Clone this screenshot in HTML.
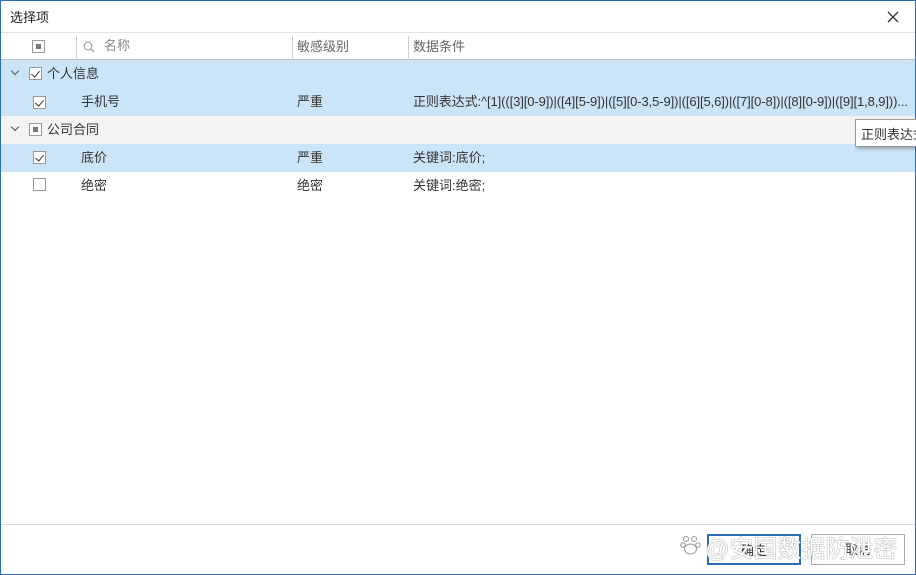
<!DOCTYPE html>
<html><head><meta charset="utf-8"><style>
*{margin:0;padding:0;box-sizing:border-box}
body{width:916px;height:575px;overflow:hidden;background:#fff;font-family:"Liberation Sans","Noto Sans CJK SC",sans-serif;font-size:12px;color:#333}
.win{position:absolute;left:0;top:0;width:916px;height:575px;border:1px solid #2b6cb5;background:#fff}
.title{position:absolute;left:9px;top:6px;font-size:13px;color:#222}
.hdr{position:absolute;left:0;top:31px;width:914px;height:28px;border-top:1px solid #e2e2e2;border-bottom:1px solid #b9c3cc}
.sep{position:absolute;top:3px;width:1px;height:22px;background:#ccc}
.cb{position:absolute;width:13px;height:13px;border:1px solid #999;background:#fff}
.cb.ind::after{content:"";position:absolute;left:3px;top:3px;width:5px;height:5px;background:#777}
.cb.chk::after{content:"";position:absolute;left:3px;top:1px;width:4px;height:7px;border-right:1.4px solid #333;border-bottom:1.4px solid #333;transform:rotate(40deg)}
.row{position:absolute;left:0;width:914px;height:28px}
.t{position:absolute;top:3px;white-space:nowrap}
.chev{position:absolute;left:11px;top:8px;width:6px;height:6px;border-right:1.3px solid #555;border-bottom:1.3px solid #555;transform:rotate(45deg)}
.foot{position:absolute;left:0;top:523px;width:914px;border-top:1px solid #ddd}
.btn{position:absolute;top:533px;width:94px;height:31px;border:1px solid #aaa;background:#fff;text-align:center;line-height:29px;font-size:13px}
.tip{position:absolute;left:854px;top:118px;width:70px;height:28px;border:1px solid #999;background:#fff;box-shadow:2px 2px 3px rgba(0,0,0,.25);padding:4px 5px;font-size:13px;white-space:nowrap;overflow:hidden}
.wm{position:absolute;left:704px;top:528px;font-size:24px;color:#fff;text-shadow:0 0 1px #888,0 0 1px #888;white-space:nowrap}
</style></head><body><div class="win">
<div class="title">选择项</div>
<svg style="position:absolute;left:886px;top:10px" width="12" height="12" viewBox="0 0 12 12"><path d="M1 1 11 11M11 1 1 11" stroke="#333" stroke-width="1.3"/></svg>
<div class="hdr">
 <div class="cb ind" style="left:31px;top:7px"></div>
 <div class="sep" style="left:75px"></div>
 <svg style="position:absolute;left:82px;top:8px" width="12" height="12" viewBox="0 0 12 12"><circle cx="5" cy="5" r="3.8" fill="none" stroke="#aaa" stroke-width="1.3"/><path d="M8 8 11 11" stroke="#aaa" stroke-width="1.5"/></svg>
 <div class="t" style="left:103px;top:2px;color:#888;font-size:13px">名称</div>
 <div class="sep" style="left:291px"></div>
 <div class="t" style="left:296px;color:#666;font-size:13px">敏感级别</div>
 <div class="sep" style="left:407px"></div>
 <div class="t" style="left:412px;color:#666;font-size:13px">数据条件</div>
</div>
<div class="row" style="top:59px;background:#cce4f7"><div class="chev"></div><div class="cb chk" style="left:28px;top:7px"></div><div class="t" style="left:46px;font-size:13px;top:3px">个人信息</div></div>
<div class="row" style="top:87px;background:#cce4f7"><div class="cb chk" style="left:32px;top:8px"></div><div class="t" style="left:80px;font-size:13px">手机号</div><div class="t" style="left:296px;font-size:13px">严重</div><div class="t" style="left:412px;font-size:13px;letter-spacing:-0.1px">正则表达式:^[1](([3][0-9])|([4][5-9])|([5][0-3,5-9])|([6][5,6])|([7][0-8])|([8][0-9])|([9][1,8,9]))...</div></div>
<div class="row" style="top:115px;background:#f3f3f3"><div class="chev"></div><div class="cb ind" style="left:28px;top:7px"></div><div class="t" style="left:46px;font-size:13px;top:3px">公司合同</div></div>
<div class="row" style="top:143px;background:#cce4f7"><div class="cb chk" style="left:32px;top:7px"></div><div class="t" style="left:80px;font-size:13px">底价</div><div class="t" style="left:296px;font-size:13px">严重</div><div class="t" style="left:412px;font-size:13px">关键词:底价;</div></div>
<div class="row" style="top:171px"><div class="cb" style="left:32px;top:6px"></div><div class="t" style="left:80px;top:3px;font-size:13px">绝密</div><div class="t" style="left:296px;top:3px;font-size:13px">绝密</div><div class="t" style="left:412px;top:3px;font-size:13px">关键词:绝密;</div></div>
<div class="tip">正则表达式</div>
<div class="foot"></div>
<div class="btn" style="left:706px;border:2px solid #2b6cb5">确定</div>
<div class="btn" style="left:810px">取消</div>
<svg style="position:absolute;left:679px;top:533px" width="22" height="22" viewBox="0 0 22 22"><g fill="#fff" stroke="#999"><circle cx="6" cy="5" r="2.5"/><circle cx="14" cy="5" r="2.5"/><circle cx="3" cy="11" r="2.3"/><circle cx="18" cy="11" r="2.3"/><ellipse cx="10.5" cy="15" rx="6" ry="5"/></g></svg>
<div class="wm">@安国数据防泄密</div>
</div></body></html>
